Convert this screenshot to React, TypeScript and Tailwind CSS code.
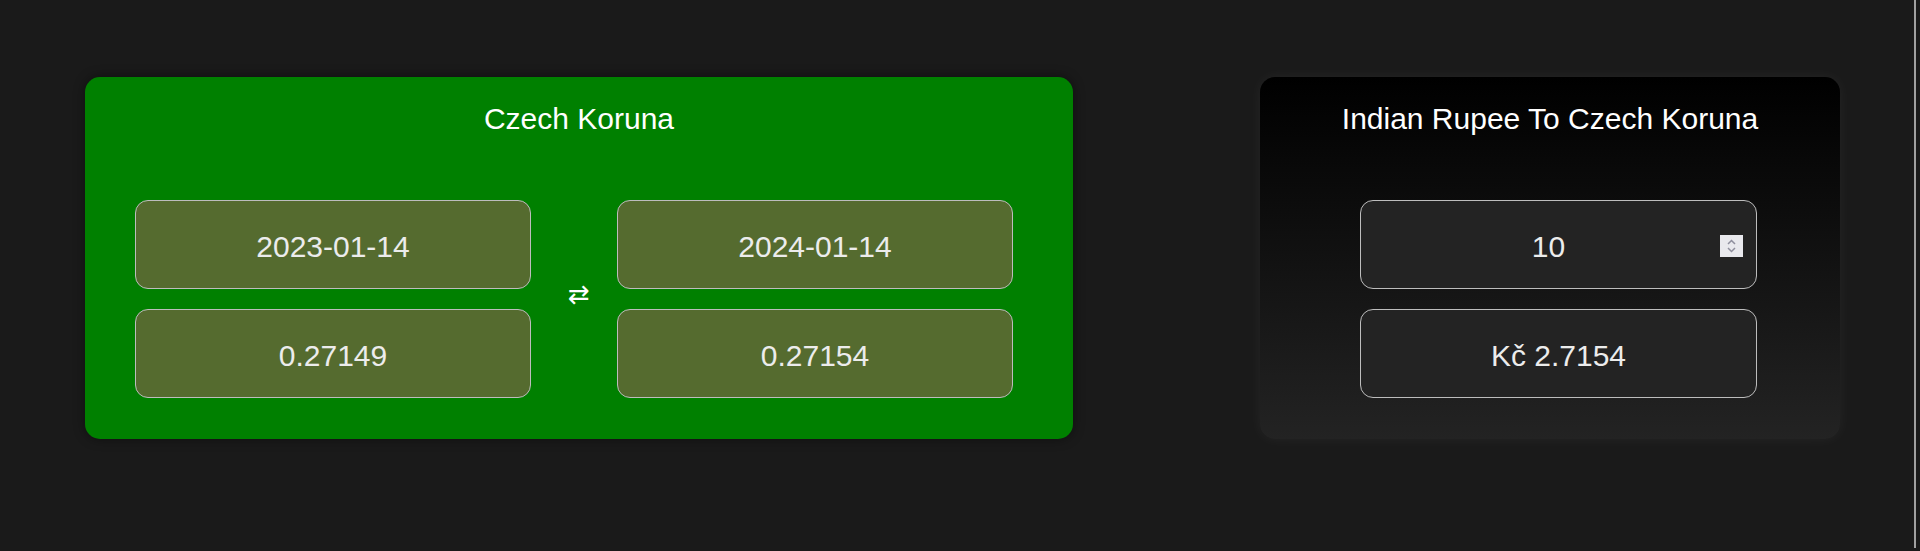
export default function App() {
  return (
    <div className="relative w-full h-[551px] overflow-hidden bg-[#1a1a1a] font-['Liberation_Sans',Arial,sans-serif]">
      <div className="flex items-start pt-[77px] pl-[85px] gap-[187px]">
        {/* carta verde: histórico de taxas */}
        <section className="w-[988px] h-[362px] rounded-[15px] bg-[#008000] pt-[25px] shadow-[0_0_12px_rgba(0,0,0,0.45)]">
          <h2 className="text-center text-[30px] leading-[34px] text-white">Czech Koruna</h2>
          <div className="mt-[64px] flex items-center pl-[50px]">
            <div className="flex flex-col gap-[20px]">
              <RateBox value="2023-01-14" />
              <RateBox value="0.27149" />
            </div>
            <div className="w-[86px] flex justify-center pl-[10px] pb-[10px] text-[26px] leading-none text-white font-['DejaVu_Sans',sans-serif]">
              ⇄
            </div>
            <div className="flex flex-col gap-[20px]">
              <RateBox value="2024-01-14" />
              <RateBox value="0.27154" />
            </div>
          </div>
        </section>

        {/* carta escura: conversor */}
        <section className="w-[580px] h-[362px] rounded-[15px] bg-[linear-gradient(to_bottom,#000,#232323)] pt-[25px] shadow-[0_0_14px_rgba(255,255,255,0.05)]">
          <h2 className="text-center text-[30px] leading-[34px] text-white">Indian Rupee To Czech Koruna</h2>
          <div className="mt-[64px] pl-[100px] flex flex-col gap-[20px]">
            <div className="relative w-[397px] h-[89px] rounded-[13px] border border-[#bdbdbd] bg-[#232323] flex items-center justify-center pt-[4px] pr-[20px] text-[30px] leading-[34px] text-[#ececec]">
              10
              <div className="absolute right-[13px] top-[34px] w-[23px] h-[22px] bg-[#e9e9ed] flex items-center justify-center">
                <svg width="11" height="16" viewBox="0 0 11 16" fill="none" stroke="#8f8f9d" strokeWidth="1.5">
                  <path d="M2 6 L5.5 2.5 L9 6" />
                  <path d="M2 10 L5.5 13.5 L9 10" />
                </svg>
              </div>
            </div>
            <div className="w-[397px] h-[89px] rounded-[13px] border border-[#bdbdbd] bg-[#232323] flex items-center justify-center pt-[4px] text-[30px] leading-[34px] text-[#ececec]">
              Kč 2.7154
            </div>
          </div>
        </section>
      </div>

      {/* barra de rolagem fina à direita */}
      <div className="absolute left-[1914px] top-0 w-[2px] h-[548px] bg-[#a0a0a0]" />
    </div>
  );
}

function RateBox({ value }: { value: string }) {
  return (
    <div className="w-[396px] h-[89px] rounded-[13px] border border-[#bdbdbd] bg-[#556b2f] flex items-center justify-center pt-[4px] text-[30px] leading-[34px] text-[#ececec]">
      {value}
    </div>
  );
}
